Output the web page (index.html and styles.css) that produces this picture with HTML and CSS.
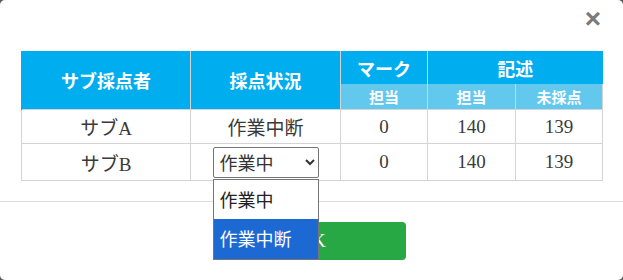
FILE: index.html
```html
<!DOCTYPE html>
<html lang="ja">
<head>
  <meta charset="UTF-8">
  <title>サブ採点者</title>
  <link rel="stylesheet" href="styles.css">
</head>
<body>
  <div class="modal">
    <div class="modal-header">
      <button class="close">&times;</button>
    </div>
    <div class="modal-body">
      <table class="sub-table">
        <colgroup>
          <col class="col-name">
          <col class="col-status">
          <col class="col-mark">
          <col class="col-desc">
          <col class="col-rest">
        </colgroup>
        <thead>
          <tr>
            <th rowspan="2">サブ採点者</th>
            <th rowspan="2">採点状況</th>
            <th>マーク</th>
            <th colspan="2">記述</th>
          </tr>
          <tr class="sub-head">
            <th>担当</th>
            <th>担当</th>
            <th>未採点</th>
          </tr>
        </thead>
        <tbody>
          <tr>
            <td>サブA</td>
            <td>作業中断</td>
            <td>0</td>
            <td>140</td>
            <td>139</td>
          </tr>
          <tr class="row-edit">
            <td>サブB</td>
            <td>
              <span class="select-wrap">
                <select class="status-select">
                  <option selected>作業中</option>
                  <option>作業中断</option>
                </select>
                <!-- opened native list -->
                <ul class="select-list">
                  <li>作業中</li>
                  <li class="active">作業中断</li>
                </ul>
              </span>
            </td>
            <td>0</td>
            <td>140</td>
            <td>139</td>
          </tr>
        </tbody>
      </table>
    </div>
    <div class="modal-footer">
      <button class="btn-ok">OK</button>
    </div>
  </div>
</body>
</html>
```

FILE: styles.css
```css
body {
  margin: 0;
  background: #5a5a5a;
  font-family: 'Liberation Serif', 'Noto Sans CJK JP', serif;
  color: #333;
}
.modal {
  width: 623px;
  height: 280px;
  background: #fff;
  border-radius: 5px;
  overflow: hidden;
}
.modal-header {
  height: 40px;
  display: flex;
  justify-content: flex-end;
  align-items: center;
  padding: 0 22px 0 0;
}
.close {
  background: none;
  border: none;
  padding: 0;
  font-family: 'Liberation Sans', sans-serif;
  font-size: 28px;
  font-weight: bold;
  line-height: 1;
  color: #7a7a7a;
  margin-top: -3px;
  cursor: pointer;
}
.modal-body {
  padding: 11px 20px 20px 21px;
}
.sub-table {
  width: 581px;
  border-collapse: collapse;
  table-layout: fixed;
  text-align: center;
}
.col-name { width: 169px; }
.col-status { width: 150px; }
.col-mark { width: 87px; }
.col-desc { width: 88px; }
.col-rest { width: 87px; }
.sub-table th {
  background: #00aeef;
  color: #fff;
  font-family: 'Noto Sans CJK JP', sans-serif;
  font-weight: bold;
  font-size: 18px;
  height: 33px;
  padding: 0;
  border: none;
  border-left: 1px solid #d4d4d4;
}
.sub-table thead tr:first-child th:first-child {
  border-left: 1px solid #00aeef;
}
.sub-table .sub-head th {
  background: #62c8ee;
  font-size: 15px;
  height: 25px;
  border-right: 1px solid #d4d4d4;
}
.sub-table td {
  border: 1px solid #d4d4d4;
  font-size: 19px;
  color: #3a3a3a;
  height: 33px;
  padding: 0;
}
.sub-table .row-edit td {
  height: 36px;
}
.select-wrap {
  position: relative;
  display: inline-block;
  vertical-align: middle;
}
.status-select {
  width: 106px;
  height: 31px;
  font-family: 'Noto Sans CJK JP', sans-serif;
  font-size: 18px;
  color: #333;
  border: 1px solid #767676;
  border-radius: 2px;
  background: #fff;
  padding: 0 2px;
  display: block;
}
.select-list {
  position: absolute;
  top: 32px;
  left: 0;
  width: 104px;
  margin: 0;
  padding: 0;
  list-style: none;
  background: #fff;
  border: 1px solid #767676;
  text-align: left;
  z-index: 2;
}
.select-list li {
  font-family: 'Noto Sans CJK JP', sans-serif;
  font-size: 18px;
  color: #222;
  height: 39px;
  line-height: 39px;
  padding-left: 6px;
}
.select-list li.active {
  background: #1d69d3;
  color: #fff;
  height: 40px;
}
.modal-footer {
  border-top: 1px solid #dcdcdc;
  padding: 20px 0;
  display: flex;
  justify-content: center;
}
.btn-ok {
  width: 187px;
  height: 38px;
  margin-left: 1px;
  background: #28a745;
  border: none;
  border-radius: 4px;
  color: #fff;
  font-family: 'Liberation Serif', serif;
  font-size: 19px;
}
```
